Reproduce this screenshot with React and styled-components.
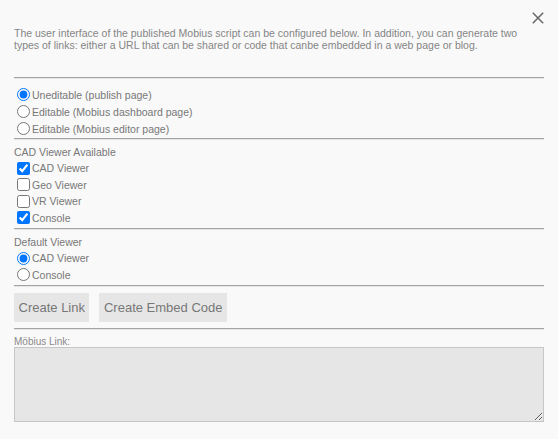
import React, { useState } from 'react';
import styled, { createGlobalStyle } from 'styled-components';

const GlobalStyle = createGlobalStyle`
  html, body {
    margin: 0;
    padding: 0;
    background: #f9f9f9;
  }
  body {
    font-family: "Liberation Sans", Arial, sans-serif;
    color: #777;
  }
`;

const Panel = styled.div`
  width: 558px;
  height: 439px;
  box-sizing: border-box;
  padding: 12px 14px 0 14px;
  display: flex;
  flex-direction: column;
`;

const CloseRow = styled.div`
  display: flex;
  justify-content: flex-end;
  height: 12px;
  padding-right: 0;
`;

const CloseButton = styled.button`
  border: none;
  background: none;
  padding: 0;
  width: 12px;
  height: 12px;
  cursor: pointer;
  display: flex;
  svg { display: block; }
`;

const Description = styled.p`
  margin: 3px 0 0 0;
  font-size: 10.5px;
  line-height: 12px;
  color: #858585;
`;

const Divider = styled.hr`
  margin: ${p => p.$top || 0}px 0 0 0;
  border: none;
  border-top: 1px solid #a3a3a3;
  border-bottom: 1px solid #e6e6e6;
  height: 0;
`;

const Section = styled.div`
  display: flex;
  flex-direction: column;
  padding-top: ${p => p.$top || 0}px;
`;

const SectionTitle = styled.div`
  font-size: 10.5px;
  line-height: 16px;
  height: 16px;
  color: #777;
`;

const Option = styled.label`
  display: flex;
  align-items: center;
  height: ${p => p.$h || 17}px;
  font-size: 10.5px;
  color: #777;
  cursor: pointer;

  input {
    width: 13px;
    height: 13px;
    margin: 0 2px 0 3px;
  }
`;

const ButtonRow = styled.div`
  display: flex;
  gap: 10px;
  margin-top: 6px;
`;

const ActionButton = styled.button`
  font-family: "Liberation Sans", Arial, sans-serif;
  font-size: 13px;
  color: #777;
  background: #e6e6e6;
  border: none;
  height: 29px;
  padding: 0 4.5px;
  cursor: pointer;
`;

const FieldLabel = styled.div`
  margin-top: 6px;
  font-size: 10px;
  line-height: 11px;
  height: 11px;
  color: #8a8a8a;
`;

const LinkBox = styled.textarea`
  margin: 0;
  box-sizing: border-box;
  width: 100%;
  height: 75px;
  background: #e6e6e6;
  border: 1px solid #c6c6c6;
  font-family: "Liberation Sans", Arial, sans-serif;
  font-size: 12px;
  color: #666;
  outline: none;
`;

const CloseIcon = () => (
  <svg width="12" height="12" viewBox="0 0 12 12">
    <path d="M0.8 0.8 L11.2 11.2 M11.2 0.8 L0.8 11.2" stroke="#666" strokeWidth="1.5" fill="none" />
  </svg>
);

const App = () => {
  const [page, setPage] = useState('publish');
  const [viewers, setViewers] = useState({ cad: true, geo: false, vr: false, console: true });
  const [defaultViewer, setDefaultViewer] = useState('cad');

  const toggle = key => setViewers(v => ({ ...v, [key]: !v[key] }));

  const pages = [
    { id: 'publish', label: 'Uneditable (publish page)' },
    { id: 'dashboard', label: 'Editable (Mobius dashboard page)' },
    { id: 'editor', label: 'Editable (Mobius editor page)' },
  ];

  const viewerList = [
    { id: 'cad', label: 'CAD Viewer' },
    { id: 'geo', label: 'Geo Viewer' },
    { id: 'vr', label: 'VR Viewer' },
    { id: 'console', label: 'Console' },
  ];

  return (
    <>
      <GlobalStyle />
      <Panel>
        <CloseRow>
          <CloseButton aria-label="Close"><CloseIcon /></CloseButton>
        </CloseRow>
        <Description>
          The user interface of the published Mobius script can be configured below. In addition, you can generate two
          <br />
          types of links: either a URL that can be shared or code that canbe embedded in a web page or blog.
        </Description>

        <Divider $top={26} />
        <Section $top={7}>
          {pages.map(p => (
            <Option key={p.id}>
              <input type="radio" name="page" checked={page === p.id} onChange={() => setPage(p.id)} />
              {p.label}
            </Option>
          ))}
        </Section>

        <Divider $top={1} />
        <Section $top={4}>
          <SectionTitle>CAD Viewer Available</SectionTitle>
          {viewerList.map(v => (
            <Option key={v.id} $h={16.5}>
              <input type="checkbox" checked={viewers[v.id]} onChange={() => toggle(v.id)} />
              {v.label}
            </Option>
          ))}
        </Section>

        <Divider $top={2} />
        <Section $top={4}>
          <SectionTitle>Default Viewer</SectionTitle>
          {viewerList.filter(v => v.id === 'cad' || v.id === 'console').map(v => (
            <Option key={v.id} $h={16.5}>
              <input type="radio" name="default" checked={defaultViewer === v.id} onChange={() => setDefaultViewer(v.id)} />
              {v.label}
            </Option>
          ))}
        </Section>

        <Divider $top={2} />
        <ButtonRow>
          <ActionButton>Create Link</ActionButton>
          <ActionButton>Create Embed Code</ActionButton>
        </ButtonRow>

        <Divider $top={6} />
        <FieldLabel>Möbius Link:</FieldLabel>
        <LinkBox readOnly />
      </Panel>
    </>
  );
};

export default App;
